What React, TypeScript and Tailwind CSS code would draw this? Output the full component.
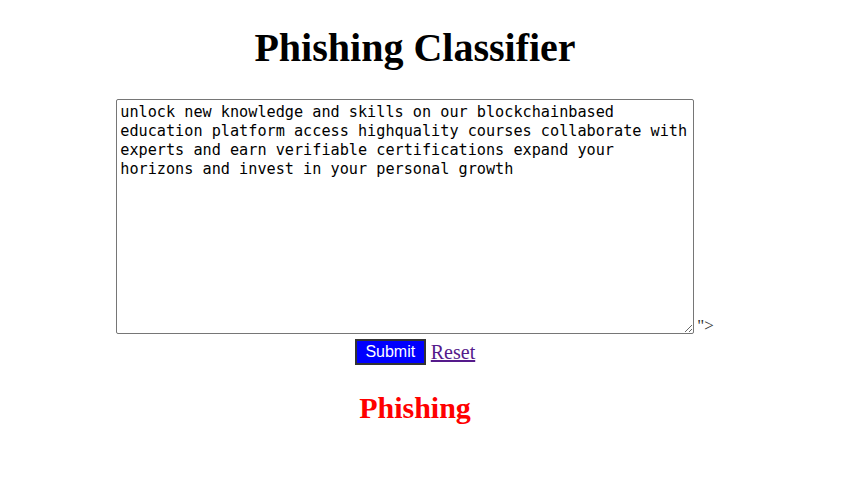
import React, { useState } from 'react';

const sample =
  'unlock new knowledge and skills on our blockchainbased education platform access highquality courses collaborate with experts and earn verifiable certifications expand your horizons and invest in your personal growth';

const App: React.FC = () => {
  const [text, setText] = useState(sample);

  return (
    <div className="w-[830px] min-h-[491px] bg-white flex flex-col items-center font-['Liberation_Serif',serif] text-black">
      <h1 className="mt-[26px] text-[40px] leading-[44px] font-bold">Phishing Classifier</h1>

      <form className="mt-[29px] flex flex-col items-center">
        <div className="flex items-end">
          <textarea
            value={text}
            onChange={(e) => setText(e.target.value)}
            className="w-[578px] h-[235px] border border-[#767676] rounded-[2px] px-[3px] pt-[3px] pb-[2px] font-['DejaVu_Sans_Mono',monospace] text-[15.2px] leading-[19px] text-black resize"
          />
          <span className="ml-[3px] text-[17px] leading-[20px] text-[#333] mb-[-2px]">"&gt;</span>
        </div>
        <div className="mt-[5px] flex items-center">
          <button
            type="button"
            className="w-[71px] h-[26px] bg-[#0000ff] text-white border-2 border-[#333] font-['Liberation_Sans',sans-serif] text-[16px] leading-[18px]"
          >
            Submit
          </button>
          <a href="#" className="ml-[5px] text-[20px] leading-[24px] text-[#551a8b] underline">
            Reset
          </a>
        </div>
      </form>

      <h2 className="mt-[26px] text-[30px] leading-[34px] font-bold text-[#ff0000]">Phishing</h2>
    </div>
  );
};

export default App;
